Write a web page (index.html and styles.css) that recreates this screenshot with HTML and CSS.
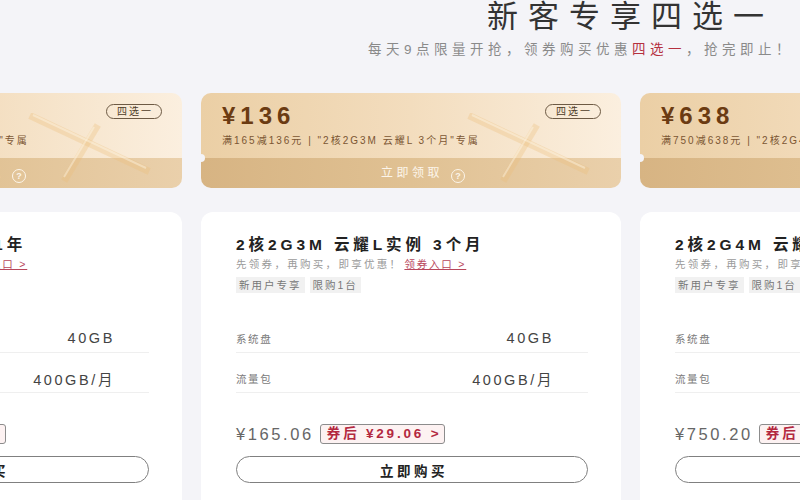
FILE: index.html
```html
<!DOCTYPE html>
<html lang="zh-CN">
<head>
<meta charset="utf-8">
<title>新客专享四选一</title>
<link rel="stylesheet" href="styles.css">
</head>
<body>
<div class="page">
  <header class="hero">
    <h1 class="hero-title">新客专享四选一</h1>
    <p class="hero-sub">每天9点限量开抢，领券购买优惠<span class="hl">四选一</span>，抢完即止！</p>
  </header>

  <div class="track">
    <!-- left card -->
    <div class="plan">
      <div class="coupon">
        <div class="coupon-top">
          <div class="coupon-price">¥468</div>
          <div class="coupon-desc">满550减468元 | "2核2G3M 云耀L 1年"专属</div>
          <span class="coupon-tag">四选一</span>
        </div>
        <div class="coupon-action">立即领取<span class="qmark">?</span></div>
        <svg class="coupon-deco" viewBox="0 0 130 70"><line x1="9" y1="4" x2="122" y2="57" class="bar"/><line x1="72" y1="15" x2="42" y2="65" class="bar"/><line x1="9" y1="2" x2="122" y2="55" class="shine"/><line x1="70" y1="14" x2="40" y2="64" class="shine"/></svg>
      </div>
      <div class="card">
        <div class="card-title">2核2G3M 云耀L实例 1年</div>
        <div class="card-sub">先领券，再购买，即享优惠！<a class="get-link">领券入口 &gt;</a></div>
        <div class="tags"><span class="tag">新用户专享</span><span class="tag">限购1台</span></div>
        <div class="specs">
          <div class="spec"><span class="spec-label">系统盘</span><span class="spec-value">40GB</span></div>
          <div class="spec"><span class="spec-label">流量包</span><span class="spec-value">400GB/月</span></div>
        </div>
        <div class="price-row"><span class="price-orig">¥550.06</span><span class="coupon-badge">券后 ¥82.06 &gt;</span></div>
        <button class="buy">立即购买</button>
      </div>
    </div>

    <!-- center card -->
    <div class="plan">
      <div class="coupon">
        <div class="coupon-top">
          <div class="coupon-price">¥136</div>
          <div class="coupon-desc">满165减136元 | "2核2G3M 云耀L 3个月"专属</div>
          <span class="coupon-tag">四选一</span>
        </div>
        <div class="coupon-action">立即领取<span class="qmark">?</span></div>
        <svg class="coupon-deco" viewBox="0 0 130 70"><line x1="9" y1="4" x2="122" y2="57" class="bar"/><line x1="72" y1="15" x2="42" y2="65" class="bar"/><line x1="9" y1="2" x2="122" y2="55" class="shine"/><line x1="70" y1="14" x2="40" y2="64" class="shine"/></svg>
      </div>
      <div class="card">
        <div class="card-title">2核2G3M 云耀L实例 3个月</div>
        <div class="card-sub">先领券，再购买，即享优惠！<a class="get-link">领券入口 &gt;</a></div>
        <div class="tags"><span class="tag">新用户专享</span><span class="tag">限购1台</span></div>
        <div class="specs">
          <div class="spec"><span class="spec-label">系统盘</span><span class="spec-value">40GB</span></div>
          <div class="spec"><span class="spec-label">流量包</span><span class="spec-value">400GB/月</span></div>
        </div>
        <div class="price-row"><span class="price-orig">¥165.06</span><span class="coupon-badge">券后 ¥29.06 &gt;</span></div>
        <button class="buy">立即购买</button>
      </div>
    </div>

    <!-- right card -->
    <div class="plan">
      <div class="coupon">
        <div class="coupon-top">
          <div class="coupon-price">¥638</div>
          <div class="coupon-desc">满750减638元 | "2核2G4M 云耀L 1年"专属</div>
          <span class="coupon-tag">四选一</span>
        </div>
        <div class="coupon-action">立即领取<span class="qmark">?</span></div>
        <svg class="coupon-deco" viewBox="0 0 130 70"><line x1="9" y1="4" x2="122" y2="57" class="bar"/><line x1="72" y1="15" x2="42" y2="65" class="bar"/><line x1="9" y1="2" x2="122" y2="55" class="shine"/><line x1="70" y1="14" x2="40" y2="64" class="shine"/></svg>
      </div>
      <div class="card">
        <div class="card-title">2核2G4M 云耀L实例 1年</div>
        <div class="card-sub">先领券，再购买，即享优惠！<a class="get-link">领券入口 &gt;</a></div>
        <div class="tags"><span class="tag">新用户专享</span><span class="tag">限购1台</span></div>
        <div class="specs">
          <div class="spec"><span class="spec-label">系统盘</span><span class="spec-value">40GB</span></div>
          <div class="spec"><span class="spec-label">流量包</span><span class="spec-value">400GB/月</span></div>
        </div>
        <div class="price-row"><span class="price-orig">¥750.20</span><span class="coupon-badge">券后 ¥112.20 &gt;</span></div>
        <button class="buy">立即购买</button>
      </div>
    </div>
  </div>
</div>
</body>
</html>
```
FILE: styles.css
```css
html, body {
  margin: 0;
  padding: 0;
}
body {
  width: 800px;
  height: 500px;
  overflow: hidden;
  background: #f4f4f8;
  font-family: "Liberation Sans", "Noto Sans CJK SC", sans-serif;
  color: #333;
}

.hero-title {
  margin: 0 0 0 487px;
  font-size: 31px;
  line-height: 34px;
  font-weight: 400;
  letter-spacing: 10px;
  color: #333;
  white-space: nowrap;
}
.hero-sub {
  margin: 7px 0 0 368px;
  font-size: 13.5px;
  line-height: 18px;
  letter-spacing: 4.5px;
  color: #8a8a8a;
  white-space: nowrap;
}
.hero-sub .hl {
  color: #b5303f;
}

.track {
  display: flex;
  gap: 19px;
  margin: 34px 0 0 -238px;
}
.plan {
  flex: 0 0 420px;
  display: flex;
  flex-direction: column;
  gap: 24px;
}

/* coupon */
.coupon {
  position: relative;
  border-radius: 10px;
  overflow: hidden;
}
.coupon-top {
  position: relative;
  height: 65px;
  box-sizing: border-box;
  padding: 9px 0 0 21px;
  background: linear-gradient(90deg, #ebcfa5 0%, #f3ddbe 50%, #fbefdf 100%);
}
.coupon-price {
  font-size: 24px;
  line-height: 28px;
  font-weight: 700;
  color: #6b3b12;
  letter-spacing: 5px;
}
.coupon-desc {
  margin-top: 4px;
  font-size: 10px;
  line-height: 14px;
  color: #7b5633;
  letter-spacing: 2px;
  white-space: nowrap;
}
.coupon-tag {
  position: absolute;
  right: 20px;
  top: 11px;
  height: 13px;
  padding: 0 8px 0 10px;
  border: 1.5px solid #6d5a44;
  border-radius: 9px;
  font-size: 10px;
  line-height: 13px;
  letter-spacing: 2px;
  color: #4e3c28;
}
.coupon-action {
  position: relative;
  height: 30px;
  line-height: 30px;
  padding-left: 24px;
  text-align: center;
  font-size: 12px;
  letter-spacing: 3.5px;
  color: #fcf5ea;
  background: linear-gradient(90deg, #d7b483 0%, #e0c193 50%, #ead0ab 100%);
}
.coupon-action::before {
  content: "";
  position: absolute;
  left: -4px;
  top: -4px;
  width: 8px;
  height: 8px;
  border-radius: 50%;
  background: #f4f4f8;
}
.qmark {
  display: inline-block;
  width: 12px;
  height: 12px;
  margin-left: 8px;
  border: 1.4px solid #fcf5ea;
  border-radius: 50%;
  font-size: 9px;
  line-height: 12px;
  font-weight: 700;
  letter-spacing: 0;
  text-align: center;
  vertical-align: -2px;
}
.coupon-deco {
  position: absolute;
  left: 262px;
  top: 20px;
  width: 130px;
  height: 70px;
  pointer-events: none;
}
.coupon-deco .bar {
  stroke: rgba(236, 190, 122, 0.32);
  stroke-width: 7;
  stroke-linecap: square;
}
.coupon-deco .shine {
  stroke: rgba(255, 250, 238, 0.4);
  stroke-width: 2;
}

/* card */
.card {
  height: 300px;
  padding: 23px 33px 0 35px;
  background: #fff;
  border-radius: 12px;
}
.card-title {
  font-size: 15.5px;
  line-height: 20px;
  font-weight: 700;
  color: #222;
  letter-spacing: 3.9px;
  white-space: nowrap;
}
.card-sub {
  margin-top: 2px;
  font-size: 10.5px;
  line-height: 14px;
  color: #9a9a9a;
  letter-spacing: 2.3px;
  white-space: nowrap;
}
.get-link {
  margin-left: 2px;
  color: #b8475c;
  text-decoration: underline;
  letter-spacing: 1.8px;
}
.tags {
  display: flex;
  gap: 5px;
  margin-top: 6px;
}
.tag {
  padding: 0 3px;
  background: #f1f1f1;
  color: #777;
  font-size: 10.5px;
  line-height: 16px;
  letter-spacing: 2px;
}
.specs {
  margin-top: 31px;
}
.spec {
  display: flex;
  justify-content: space-between;
  align-items: center;
  height: 28px;
  padding-right: 34px;
  border-bottom: 1px solid #efefef;
}
.spec + .spec {
  margin-top: 11px;
}
.spec-label {
  font-size: 10.5px;
  color: #7a7a7a;
  letter-spacing: 1.6px;
}
.spec-value {
  font-size: 14.5px;
  color: #444;
  letter-spacing: 2.6px;
}
.price-row {
  display: flex;
  align-items: center;
  gap: 6px;
  height: 20px;
  margin-top: 31px;
}
.price-orig {
  font-size: 16.5px;
  color: #666;
  letter-spacing: 2.6px;
}
.coupon-badge {
  padding: 0 3px 0 6px;
  border: 1px solid #8c8c8c;
  border-radius: 3px;
  background: #fdf2f2;
  color: #b3283f;
  font-weight: 700;
  font-size: 13.5px;
  line-height: 18px;
  letter-spacing: 2.8px;
  white-space: nowrap;
}
.buy {
  display: block;
  width: 100%;
  height: 27px;
  margin-top: 12px;
  padding: 0 0 0 4px;
  border: 1px solid #808080;
  border-radius: 14px;
  background: #fff;
  font-family: inherit;
  font-size: 13.5px;
  font-weight: 700;
  letter-spacing: 3.5px;
  color: #222;
}
```
